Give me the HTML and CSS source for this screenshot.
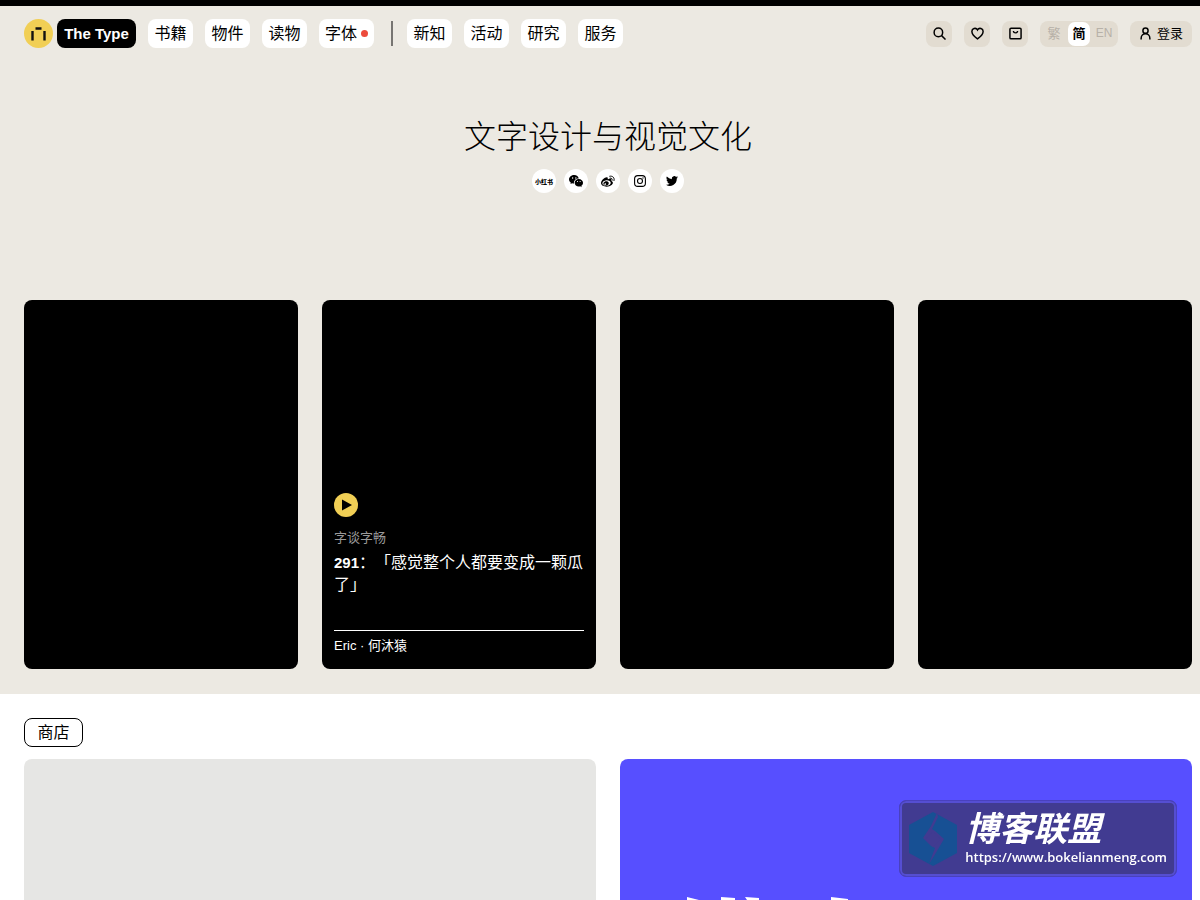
FILE: index.html
```html
<!DOCTYPE html>
<html lang="zh-Hans">
<head>
<meta charset="utf-8">
<meta name="viewport" content="width=device-width, initial-scale=1">
<title>The Type</title>
<link rel="stylesheet" href="styles.css">
</head>
<body>
<div class="top">
  <header class="bar">
    <a class="logo" href="#" aria-label="The Type">
      <svg class="mark" viewBox="0 0 29 29" aria-hidden="true"><circle cx="14.500" cy="14.500" r="14.500" fill="#f1cf55"/><path d="M11.500 9.500h6M8.500 12v9.500M20.500 12v9.500" stroke="#111" stroke-width="2.400" fill="none"/></svg>
      <span class="name">The Type</span>
    </a>
    <nav class="menu">
      <a class="tag" href="#">书籍</a>
      <a class="tag" href="#">物件</a>
      <a class="tag" href="#">读物</a>
      <a class="tag" href="#">字体<i class="dot"></i></a>
      <span class="divider"></span>
      <a class="tag" href="#">新知</a>
      <a class="tag" href="#">活动</a>
      <a class="tag" href="#">研究</a>
      <a class="tag" href="#">服务</a>
    </nav>
    <div class="tools">
      <button class="tool" aria-label="搜索"><svg viewBox="0 0 14 14"><circle cx="5.800" cy="5.800" r="4.600"/><path d="M9 9l4.500 4.500"/></svg></button>
      <button class="tool" aria-label="收藏"><svg viewBox="0 0 14 14"><path d="M7 12.800C4 10.500 1 8 1 5A3.200 3.200 0 0 1 7 3.200 3.200 3.200 0 0 1 13 5c0 3-3 5.500-6 7.800z"/></svg></button>
      <button class="tool" aria-label="购物袋"><svg viewBox="0 0 14 14"><rect x="1" y="1.300" width="12" height="11.400" rx="1.200"/><path d="M4.700 4.300c.3 2.700 4.300 2.700 4.600 0"/></svg></button>
      <div class="langs">
        <button class="lang">繁</button>
        <button class="lang on">简</button>
        <button class="lang">EN</button>
      </div>
      <button class="tool login"><svg viewBox="0 0 14 14"><circle cx="7" cy="4" r="2.800"/><path d="M2.300 13.500V12a4.700 4.700 0 0 1 9.400 0v1.500"/></svg>登录</button>
    </div>
  </header>

  <section class="hero">
    <h1 class="slogan">文字设计与视觉文化</h1>
    <div class="social">
      <a class="round red" href="#">小红书</a>
      <a class="round" href="#" aria-label="微信"><svg viewBox="0 0 24 24"><path d="M9 1.500C4.300 1.500 0 4.700 0 9c0 2.300 1.200 4.500 3.200 5.800l-.8 2.500 3-1.500c1 .3 2 .5 3.200.5-.9-4.900 3.300-8.700 8.100-8.500C16.400 4.200 13 1.500 9 1.500zM6.200 8a1.200 1.200 0 1 1 0-2.400 1.200 1.200 0 0 1 0 2.400zm5.600 0a1.200 1.200 0 1 1 0-2.400 1.200 1.200 0 0 1 0 2.400z"/><path d="M24 15c0-3.500-3.300-6.500-7.200-6.500S9.700 11.500 9.700 15s3.200 6.500 7.100 6.500c.9 0 1.700-.1 2.500-.4l2.400 1.500-.6-2.300C23 19.100 24 17.100 24 15zm-9.400-1.100a1 1 0 1 1 0-2 1 1 0 0 1 0 2zm4.500 0a1 1 0 1 1 0-2 1 1 0 0 1 0 2z"/></svg></a>
      <a class="round" href="#" aria-label="微博"><svg viewBox="0 0 24 24"><path fill-rule="evenodd" d="M10 20.300c-4 .4-7.300-1.400-7.600-4-.2-2.600 2.800-5 6.700-5.400 4-.4 7.400 1.400 7.600 4 .3 2.600-2.700 5-6.700 5.400zM17.900 12c-.3-.1-.6-.2-.4-.6.400-1 .4-1.800 0-2.400-.8-1.100-2.900-1-5.400 0 0 0-.8.300-.6-.3.400-1.200.3-2.200-.3-2.800C9.900 4.500 6.300 6 3.300 9 1.100 11.200 0 13.600 0 15.600c0 3.900 4.900 6.200 9.800 6.200 6.400 0 10.600-3.700 10.600-6.600 0-1.800-1.500-2.800-2.500-3.200z"/><path d="M10.300 12.400c-2.300-.6-4.900.5-5.900 2.500-1 2.100 0 4.200 2.300 5 2.500.7 5.300-.4 6.300-2.600 1-2.100-.2-4.300-2.700-4.900zM8.500 18c-.5.700-1.500 1.100-2.200.7-.7-.3-.9-1.200-.4-1.900.4-.8 1.400-1.100 2.100-.8.800.3 1 1.200.5 2z"/><path d="M15 3.800c5-1.100 8.800 2.700 7.300 7.500M15.500 7c2.500-.5 4.400 1.400 3.600 3.800" fill="none" stroke="#000" stroke-width="1.700" stroke-linecap="round"/></svg></a>
      <a class="round" href="#" aria-label="Instagram"><svg class="small" viewBox="0 0 24 24" fill="none" stroke="#000" stroke-width="2.200"><rect x="1.200" y="1.200" width="21.600" height="21.600" rx="6.500"/><circle cx="12" cy="12" r="5"/><circle cx="18" cy="6" r=".4"/></svg></a>
      <a class="round" href="#" aria-label="Twitter"><svg class="small" viewBox="0 0 24 24"><path d="M24 4.600a10 10 0 0 1-2.800.8 5 5 0 0 0 2.100-2.700 9.900 9.900 0 0 1-3.100 1.200 4.900 4.900 0 0 0-8.400 4.500A14 14 0 0 1 1.700 3.200a4.900 4.900 0 0 0 1.500 6.500 4.900 4.900 0 0 1-2.200-.6c0 2.300 1.600 4.400 3.900 4.900a5 5 0 0 1-2.200.1 4.900 4.900 0 0 0 4.600 3.400A9.900 9.900 0 0 1 0 19.500a13.900 13.900 0 0 0 21.500-12.400c1-.7 1.800-1.600 2.500-2.500z"/></svg></a>
    </div>
  </section>

  <section class="cards">
    <a class="card" href="#" aria-label="文章"></a>
    <a class="card" href="#">
      <svg class="play" viewBox="0 0 24 24" aria-hidden="true"><circle cx="12" cy="12" r="12" fill="#f1cf55"/><path d="M8 6.500v11l10-5.500z"/></svg>
      <span class="series">字谈字畅</span>
      <h2 class="title"><b class="num">291</b>：「感觉整个人都要变成一颗瓜了」</h2>
      <span class="people">Eric · 何沐猿</span>
    </a>
    <a class="card" href="#" aria-label="文章"></a>
    <a class="card" href="#" aria-label="文章"></a>
  </section>
</div>

<main class="shop">
  <a class="label" href="#">商店</a>
  <div class="goods">
    <a class="good" href="#" aria-label="商品"></a>
    <a class="good blue" href="#" aria-label="商品">
      <svg class="art" viewBox="0 0 572 3" aria-hidden="true"><path d="M67 0l12 3H67zM101 0l14 1v2h-14zM125 0l14 1v2h-12zM211 0l17 2v1h-17z" fill="#fff"/></svg>
    </a>
  </div>
</main>

<aside class="stamp">
  <svg class="hex" viewBox="0 0 48 54" aria-hidden="true"><path d="M24 0l24 13v28L24 54 0 41V13z" fill="#175094"/><path d="M28 1l-6 13-8 12 8 8 4 2-6 16 5-8 10-17-9-8-3-2 6-12z" fill="#413b91"/><path d="M24 20l8 7-8 8-8-8z" fill="#413b91"/></svg>
  <div class="words">
    <strong class="brand">博客联盟</strong>
    <span class="url">https://www.bokelianmeng.com</span>
  </div>
</aside>
</body>
</html>
```
FILE: styles.css
```css
* { box-sizing: border-box; }
body {
  margin: 0;
  min-height: 100vh;
  display: flex;
  flex-direction: column;
  background: #fff;
  color: #000;
  font-family: "Liberation Sans", "Noto Sans CJK SC", sans-serif;
  font-size: 16px;
}
a { color: inherit; text-decoration: none; }
button { border: 0; padding: 0; font: inherit; color: inherit; background: none; }

.top {
  border-top: 6px solid #000;
  background: #ece9e2;
  padding: 13px 8px 25px 24px;
}
.bar { display: flex; align-items: center; }
.logo { display: flex; align-items: center; gap: 4px; }
.mark { width: 29px; height: 29px; }
.name {
  min-width: 79px;
  height: 29px;
  border-radius: 8px;
  background: #000;
  color: #fff;
  font-size: 15px;
  font-weight: 700;
  line-height: 29px;
  text-align: center;
}
.menu { display: flex; align-items: center; gap: 12px; margin-left: 12px; }
.tag {
  display: flex;
  align-items: center;
  justify-content: center;
  gap: 4px;
  min-width: 45px;
  height: 29px;
  padding: 0 6px;
  border-radius: 8px;
  background: #fff;
  font-weight: 400;
  line-height: 27px;
}
.dot { width: 7px; height: 7px; border-radius: 50%; background: #ec4b3c; }
.divider { width: 2px; height: 25px; margin: 0 2px 0 5px; background: #777572; }

.tools { display: flex; gap: 12px; margin-left: auto; }
.tool {
  display: flex;
  align-items: center;
  justify-content: center;
  gap: 5px;
  width: 26px;
  height: 26px;
  border-radius: 8px;
  background: #e2dcd1;
}
.tool svg { width: 13px; height: 13px; fill: none; stroke: #000; stroke-width: 1.6; }
.login { width: 62px; font-size: 13px; line-height: 24px; }
.langs { display: flex; width: 78px; border-radius: 8px; background: #e2dcd1; padding: 1px 2px; }
.lang { flex: 1 1 0; border-radius: 7px; color: #b7b1a8; font-size: 13px; line-height: 23px; }
.lang:last-child { font-size: 12px; }
.lang.on { flex: 0 0 22px; margin: 0 2px; background: #fff; color: #000; font-weight: 700; }

.hero {
  display: flex;
  flex-direction: column;
  align-items: center;
  gap: 8px;
  padding: 65px 0 107px;
}
.slogan { margin: 0; font-size: 32px; font-weight: 300; line-height: 48px; }
.social { display: flex; gap: 8px; }
.round {
  display: flex;
  align-items: center;
  justify-content: center;
  width: 24px;
  height: 24px;
  border-radius: 50%;
  background: #fff;
}
.round svg { width: 14px; height: 14px; }
.round .small { width: 12px; height: 12px; }
.red { font-size: 6px; font-weight: 900; }

.cards { display: grid; grid-template-columns: repeat(4, 1fr); gap: 24px; }
.card {
  display: flex;
  flex-direction: column;
  justify-content: flex-end;
  min-height: 369px;
  padding: 12px;
  border-radius: 8px;
  background: #000;
  color: #fff;
}
.play { width: 24px; height: 24px; }
.series { margin-top: 11px; color: #999; font-size: 13px; font-weight: 400; line-height: 20px; }
.title {
  margin: 2px 0 36px;
  font-family: "Noto Sans CJK SC", sans-serif;
  font-size: 16px;
  font-weight: 400;
  line-height: 22px;
  text-spacing-trim: space-all;
}
.num { font-family: "Liberation Sans", sans-serif; font-size: 15px; font-weight: 700; line-height: 1; }
.people { padding-top: 4px; border-top: 1px solid #fff; font-size: 13px; line-height: 22px; }

.shop { flex: 1; display: flex; flex-direction: column; align-items: flex-start; gap: 12px; padding: 24px 8px 0 24px; }
.label {
  min-width: 59px;
  padding: 0 12px;
  border: 1px solid #000;
  border-radius: 8px;
  font-weight: 400;
  line-height: 27px;
  text-align: center;
}
.goods { flex: 1; align-self: stretch; display: grid; grid-template-columns: 1fr 1fr; gap: 24px; }
.good { display: flex; align-items: flex-end; min-height: 141px; border-radius: 8px 8px 0 0; background: #e6e6e4; }
.blue { background: #574fff; }
.art { display: block; width: 100%; }

.stamp {
  position: fixed;
  right: 23px;
  bottom: 23px;
  display: flex;
  align-items: center;
  gap: 8px;
  height: 77px;
  padding: 0 9px;
  border: 1px solid #4941bd;
  border-radius: 7px;
  background: #413b91;
  box-shadow: inset 0 0 0 2px #554ed2;
  color: #fff;
}
.hex { width: 48px; height: 54px; }
.words { display: flex; flex-direction: column; }
.brand { font: italic 700 34px/36px "Noto Sans CJK SC", sans-serif; }
.url { font: 600 13px/24px "Open Sans", sans-serif; }
```
